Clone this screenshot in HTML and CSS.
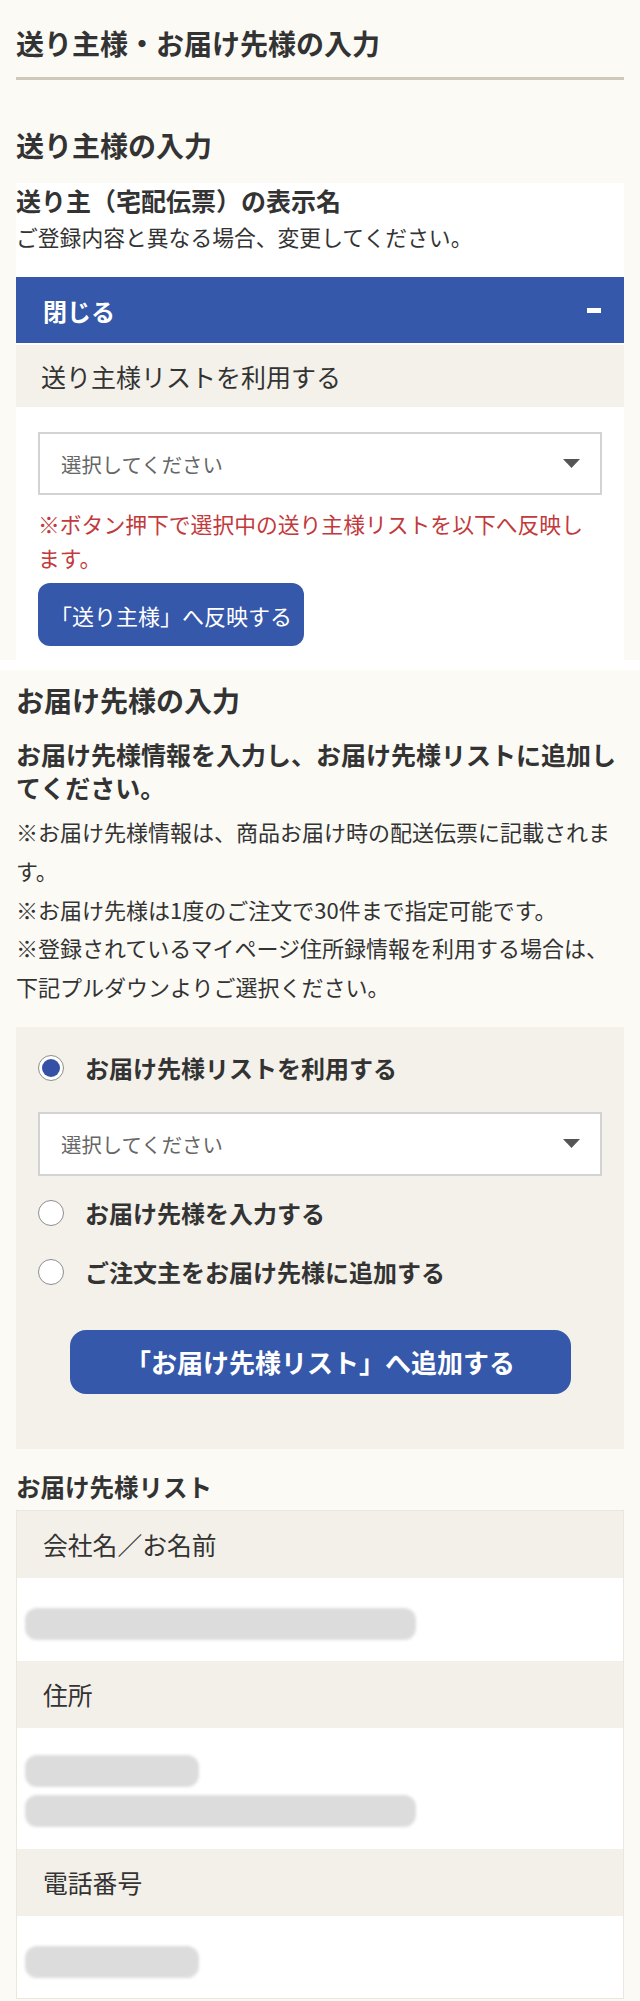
FILE: index.html
```html
<!DOCTYPE html>
<html lang="ja">
<head>
<meta charset="utf-8">
<title>送り主様・お届け先様の入力</title>
<link rel="stylesheet" href="styles.css">
</head>
<body>
<section class="sec1">
  <h1 class="page-title">送り主様・お届け先様の入力</h1>
  <h2 class="sec-title sec-title-first">送り主様の入力</h2>
  <div class="sender-box">
    <p class="field-label">送り主（宅配伝票）の表示名</p>
    <p class="field-desc">ご登録内容と異なる場合、変更してください。</p>
    <div class="acc-head"><span>閉じる</span><span class="minus"></span></div>
    <div class="acc-sub">送り主様リストを利用する</div>
    <div class="acc-body">
      <div class="select"><span>選択してください</span><svg class="arrow" width="17" height="9" viewBox="0 0 17 9"><polygon points="0,0 17,0 8.5,9" fill="#555"/></svg></div>
      <p class="note">※ボタン押下で選択中の送り主様リストを以下へ反映します。</p>
      <div class="btn btn-reflect">「送り主様」へ反映する</div>
    </div>
  </div>
</section>
<div class="strip"></div>
<section class="sec2">
  <h2 class="sec-title">お届け先様の入力</h2>
  <p class="lead">お届け先様情報を入力し、お届け先様リストに追加してください。</p>
  <div class="notes">
    <p>※お届け先様情報は、商品お届け時の配送伝票に記載されます。</p>
    <p>※お届け先様は1度のご注文で30件まで指定可能です。</p>
    <p>※登録されているマイページ住所録情報を利用する場合は、</p>
    <p>下記プルダウンよりご選択ください。</p>
  </div>
  <div class="panel">
    <div class="radio-row"><span class="radio checked"></span><span>お届け先様リストを利用する</span></div>
    <div class="select select-panel"><span>選択してください</span><svg class="arrow" width="17" height="9" viewBox="0 0 17 9"><polygon points="0,0 17,0 8.5,9" fill="#555"/></svg></div>
    <div class="radio-row r2"><span class="radio"></span><span>お届け先様を入力する</span></div>
    <div class="radio-row r3"><span class="radio"></span><span>ご注文主をお届け先様に追加する</span></div>
    <div class="btn btn-add">「お届け先様リスト」へ追加する</div>
  </div>
  <h3 class="list-title">お届け先様リスト</h3>
  <div class="table">
    <div class="th">会社名／お名前</div>
    <div class="td td1"><div class="blur w-long"></div></div>
    <div class="th">住所</div>
    <div class="td td2"><div class="blur w-short"></div><div class="blur w-long gap"></div></div>
    <div class="th">電話番号</div>
    <div class="td td3"><div class="blur w-short"></div></div>
  </div>
</section>
</body>
</html>
```
FILE: styles.css
```css
body {
  margin: 0;
  background: #fbfaf5;
  font-family: "Noto Sans CJK JP", "Noto Sans", sans-serif;
  color: #333;
}
p, h1, h2, h3 { margin: 0; }

.sec1 { padding: 22px 16px 0; }
.page-title {
  font-size: 28px;
  line-height: 42px;
  font-weight: 700;
  padding-bottom: 13px;
  border-bottom: 3px solid #cfc9bd;
}
.sec-title {
  font-size: 28px;
  line-height: 42px;
  font-weight: 700;
}
.sec-title-first { margin-top: 44px; }

.sender-box {
  background: #fff;
  margin-top: 17px;
  padding-bottom: 14px;
}
.field-label {
  font-size: 25px;
  line-height: 34px;
  font-weight: 700;
}
.field-desc {
  font-size: 21.8px;
  line-height: 34px;
  margin-top: 3px;
}
.acc-head {
  margin-top: 23px;
  height: 66px;
  background: #3558ab;
  color: #fff;
  display: flex;
  align-items: center;
  justify-content: space-between;
  padding: 0 23px 0 27px;
  font-size: 24px;
  font-weight: 700;
}
.minus {
  width: 14px;
  height: 5px;
  background: #fff;
}
.acc-sub {
  margin-top: 2px;
  height: 62px;
  background: #f3f1ea;
  display: flex;
  align-items: center;
  padding-left: 25px;
  font-size: 25px;
}
.acc-body { padding: 25px 22px 0; }

.select {
  box-sizing: border-box;
  height: 63px;
  border: 2px solid #d3d3d3;
  background: #fff;
  display: flex;
  align-items: center;
  justify-content: space-between;
  padding: 0 20px 0 21px;
  font-size: 20.4px;
  color: #666;
}
.arrow { display: block; }

.note {
  color: #c23a3c;
  font-size: 21.8px;
  line-height: 34px;
  margin: 12px 8px 0 0;
}
.btn {
  box-sizing: border-box;
  background: #3558ab;
  color: #fff;
  display: flex;
  align-items: center;
  justify-content: center;
}
.btn-reflect {
  margin-top: 8px;
  width: 266px;
  height: 63px;
  border-radius: 12px;
  font-size: 22px;
}

.strip { height: 10px; background: #fff; }

.sec2 { padding: 9px 16px 0; }
.lead {
  font-size: 25px;
  line-height: 33px;
  font-weight: 700;
  margin-top: 17px;
}
.notes { margin-top: 8px; }
.notes p {
  font-size: 22px;
  line-height: 38.75px;
}

.panel {
  margin-top: 21px;
  background: #f3f1ea;
  padding: 21px 22px 55px;
}
.radio-row {
  display: flex;
  align-items: center;
  gap: 21px;
  height: 40px;
  font-size: 24px;
  font-weight: 700;
}
.radio {
  box-sizing: border-box;
  width: 26px;
  height: 26px;
  border-radius: 50%;
  border: 1.5px solid #8e8e8e;
  background: #fff;
  display: flex;
  align-items: center;
  justify-content: center;
  flex: none;
}
.radio.checked::after {
  content: "";
  width: 18px;
  height: 18px;
  border-radius: 50%;
  background: #3451a6;
}
.select-panel { margin-top: 24px; height: 64px; }
.r2 { margin-top: 17px; }
.r3 { margin-top: 19px; }
.btn-add {
  margin: 38px auto 0;
  width: 501px;
  height: 64px;
  border-radius: 16px;
  font-size: 26px;
  font-weight: 700;
}

.list-title {
  font-size: 24.5px;
  line-height: 36px;
  font-weight: 700;
  margin-top: 20px;
}
.table {
  margin-top: 5px;
  border: 1px solid #ebe7de;
  background: #fff;
}
.th {
  height: 67px;
  background: #f3f0e9;
  display: flex;
  align-items: center;
  padding-left: 26px;
  font-size: 24.8px;
}
.td { padding-left: 8px; }
.td1 { padding-top: 30px; padding-bottom: 21px; }
.td2 { padding-top: 27px; padding-bottom: 22px; }
.td3 { padding-top: 30px; padding-bottom: 20px; }
.blur {
  height: 32px;
  background: #dcdcdc;
  border-radius: 12px;
  filter: blur(1.5px);
}
.w-long { width: 391px; }
.w-short { width: 174px; }
.gap { margin-top: 8px; }
```
